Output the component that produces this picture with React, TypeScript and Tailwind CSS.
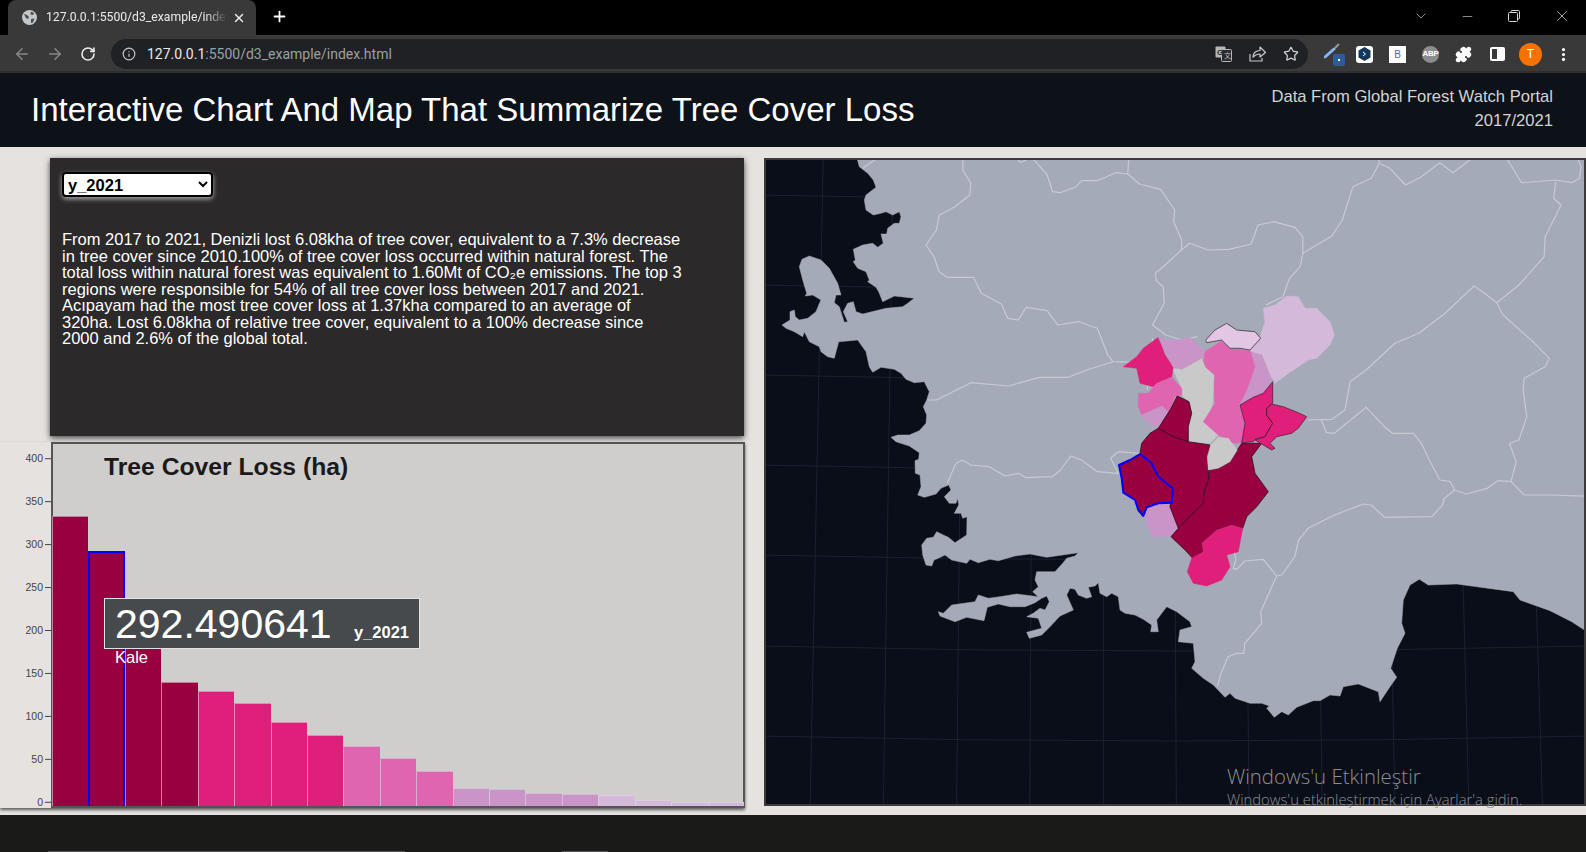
import { ArrowLeft, ArrowRight, ChevronDown, Minus, MoreVertical, Plus, Puzzle, RotateCw, Star, X, Info } from 'lucide-react'

type Pt = [number, number]

// Traced map points, kept in the crop coordinates they were read from
const z5 = (p: Pt): Pt => [760 + p[0] * 0.527, 150 + p[1] / 3]
const z6 = (p: Pt): Pt => [760 + p[0] * 0.527, 500 + p[1] / 3]
const z7 = (p: Pt): Pt => [1090 + p[0] / 3, 280 + p[1] / 3]
const crop = (x: number, y: number) => (p: Pt): Pt => [x + p[0] / 3, y + p[1] / 3]
const pts = (list: Pt[]) => list.map(p => `${p[0].toFixed(1)},${p[1].toFixed(1)}`).join(' ')

const COAST_A: Pt[] = [[272,-10],[280,20],[305,40],[322,60],[330,82],[300,105],[295,120],[300,150],[322,165],[345,160],[360,155],[380,165],[400,155],[405,170],[400,190],[385,190],[365,205],[362,222],[345,222],[352,250],[335,262],[320,250],[290,255],[262,268],[268,300],[262,305],[275,325],[300,335],[310,360],[305,365],[330,382],[338,395],[350,425],[385,408],[445,415],[425,430],[410,440],[360,445],[290,462],[270,455],[262,425],[245,430],[232,455],[245,485],[235,487],[220,440],[205,428],[210,405],[225,405],[215,370],[190,325],[165,300],[130,288],[108,298],[100,320],[110,360],[122,400],[118,408],[140,405],[165,420],[158,435],[150,455],[125,475],[100,480],[88,470],[85,450],[72,455],[72,480],[48,495],[60,505],[85,515],[110,530],[115,515],[130,545],[160,560],[165,575],[185,590],[205,595],[218,545]]
const COAST_B: Pt[] = [[220,5],[275,0],[300,35],[310,80],[320,97],[345,82],[385,88],[405,100],[420,118],[445,128],[475,125],[490,155],[482,180],[472,200],[482,225],[480,250],[460,272],[430,285],[395,285],[375,292],[390,305],[430,318],[460,338],[458,358],[447,362],[448,400],[462,405],[465,440],[455,465],[475,472],[510,462],[525,445],[548,435],[555,450],[535,470],[550,490],[570,490],[575,475],[578,495],[565,520],[585,520],[590,535],[603,530]]
const COAST_C: Pt[] = [[170,15],[135,38],[115,22],[100,15],[80,5],[70,22],[50,25],[35,45],[38,75],[48,105],[65,108],[72,90],[85,85],[105,75],[125,90],[170,100],[180,88],[205,98],[240,88],[265,92],[315,78],[360,72],[410,82],[505,68],[495,78],[470,85],[458,100],[435,125],[380,125],[375,150],[385,170],[368,185],[385,200],[320,192],[270,200],[235,205],[205,195],[195,215],[125,225],[100,250],[85,245],[90,258],[135,275],[170,262],[222,272],[232,232],[265,222],[300,230],[345,230],[375,218],[395,205],[410,198],[418,215],[405,240],[390,235],[370,250],[350,260],[385,265],[395,295],[350,307],[358,325],[395,315],[420,290],[450,258],[490,240],[470,195],[480,175],[495,178],[505,195],[530,205],[545,200],[535,172],[555,168],[565,158],[570,190],[590,200],[605,190],[625,200],[630,240],[645,250],[675,255],[700,268],[725,285],[722,305],[745,305],[740,270],[755,250],[770,230],[800,245],[840,275],[845,290],[810,300],[805,335],[850,340],[855,395],[845,415],[880,445],[900,458]]
const COAST_D: Pt[] = [[130,345],[165,382],[180,370],[195,385],[240,400],[275,400],[298,408],[290,415],[313,442],[335,425],[355,435],[380,412],[430,392],[450,392],[480,375],[510,378],[520,350],[565,342],[625,365],[630,395],[660,350],[680,322],[662,295],[682,235],[705,190],[695,160],[700,90],[720,45],[748,28],[775,45],[860,42],[1030,65],[1050,90],[1140,122],[1205,155],[1240,178],[1290,200]]

const LAND: Pt[] = [
  ...COAST_A.map(crop(766, 160)),
  ...COAST_B.map(crop(766, 340)),
  ...COAST_C.map(crop(910, 530)),
  ...COAST_D.map(crop(1170, 570)),
  [1600, 150],
]

const BORDERS_TOP: Pt[][] = [
  [[385,20],[385,60],[400,100],[398,135],[370,170],[340,195],[335,240],[315,285],[330,320],[340,365],[355,382],[405,382],[420,430],[458,462],[470,505],[490,510],[505,472],[545,482],[565,525],[605,515],[640,535],[660,615],[670,635],[720,637]],
  [[670,635],[620,660],[585,682],[530,682],[472,708],[400,698],[360,730],[335,750],[318,750]],
  [[515,20],[545,75],[555,125],[570,128],[600,110],[610,92],[640,92],[675,68],[698,72],[700,20]],
  [[698,72],[720,102],[760,118],[787,180],[785,215],[800,270],[800,300],[765,350],[750,370],[752,392],[765,410],[767,460],[745,525],[770,555],[800,570],[830,560]],
  [[800,300],[815,280],[850,300],[890,298],[932,282],[945,225],[975,215],[1015,232],[1030,260],[1030,310],[1025,350],[1005,385],[992,440]],
  [[1030,310],[1085,258],[1105,210],[1125,110],[1160,85],[1175,40],[1175,20]],
  [[1175,40],[1195,55],[1225,105],[1255,80],[1290,38],[1315,68],[1355,20]],
  [[1415,20],[1445,98],[1510,90],[1540,98],[1555,85],[1558,50],[1550,20]],
  [[1510,95],[1506,145],[1520,165],[1490,260],[1488,320],[1440,405],[1398,458],[1375,430],[1355,408],[1300,490],[1250,550],[1205,580],[1150,660],[1120,695],[1110,780],[1085,808],[1040,810]],
  [[1398,458],[1410,495],[1470,580],[1498,625],[1490,650],[1450,685],[1448,720],[1455,800],[1440,870],[1422,880],[1435,935],[1425,995],[1400,992],[1380,1015],[1340,1032],[1318,1020],[1295,1050]],
  [[1425,995],[1450,1035],[1500,1035],[1600,1040]],
  [[1065,810],[1075,848],[1090,850],[1150,772],[1185,830],[1200,850],[1240,850],[1255,880],[1270,930],[1290,990],[1310,995],[1318,1020]],
  [[720,910],[680,905],[665,925],[680,970],[640,965],[610,930],[590,918],[570,960],[555,980],[505,983],[490,970],[465,978],[435,950],[400,945],[385,930],[372,940],[355,1000]],
  [[975,700],[1045,620]],
  [[490,30],[495,38],[510,25]],
  [[195,55],[222,25]],
  [[960,465],[992,440]],
  [[745,565],[735,720]],
]
const BORDERS_BOTTOM: Pt[][] = [
  [[1298,0],[1295,15],[1275,50],[1185,52],[1160,15],[1145,12],[1090,45],[1040,85],[1022,120],[1015,170],[990,225],[980,228],[955,178],[920,183],[905,208],[898,205],[903,180],[900,155]],
  [[980,228],[950,335],[952,370],[920,430],[918,460],[905,460],[888,470],[875,520],[868,560]],
]

const CRIMSON = '#98003f'
const HOT = '#df1f7a'
const PINK = '#e065b0'
const PURPLE = '#c994c7'
const LILAC = '#d4b9da'
const GREY = '#c9c9c9'

const REGIONS: { fill: string; stroke?: string; width?: number; points: Pt[] }[] = [
  { fill: LILAC, points: [[520,85],[555,75],[590,48],[625,50],[645,85],[680,85],[700,105],[720,125],[733,165],[720,195],[680,235],[655,240],[610,270],[555,305],[545,295],[520,235],[480,212],[510,170],[525,125]] },
  { fill: PURPLE, points: [[480,215],[515,225],[545,300],[520,340],[490,352],[447,375],[470,330],[495,260]] },
  { fill: PINK, points: [[345,215],[395,182],[420,205],[480,212],[495,260],[470,330],[447,375],[420,365],[375,370],[368,290],[340,250]] },
  { fill: GREY, points: [[247,265],[275,268],[335,235],[345,262],[372,285],[368,370],[355,420],[340,425],[385,465],[360,490],[295,485],[295,440],[305,400],[297,365],[275,345],[275,325]] },
  { fill: PINK, points: [[375,370],[420,365],[447,375],[465,430],[455,488],[430,490],[385,465],[340,425]] },
  { fill: HOT, points: [[100,260],[140,230],[160,205],[205,172],[225,225],[250,262],[245,290],[215,305],[190,320],[150,310],[140,265]] },
  { fill: PURPLE, points: [[205,172],[225,180],[265,180],[300,172],[345,215],[335,235],[275,268],[250,262]] },
  { fill: PINK, points: [[145,340],[175,340],[200,310],[245,292],[275,325],[275,345],[255,350],[235,395],[215,378],[155,405],[145,380]] },
  { fill: PURPLE, points: [[155,405],[215,378],[235,395],[203,445],[165,420]] },
  { fill: PURPLE, points: [[165,700],[170,682],[205,670],[240,675],[265,745],[245,768],[190,770],[170,735]] },
  { fill: CRIMSON, stroke: '#2a1020', width: 0.8, points: [[205,445],[240,390],[262,348],[297,365],[305,400],[295,440],[295,485],[250,470]] },
  { fill: CRIMSON, stroke: '#2a1020', width: 0.8, points: [[150,520],[155,490],[180,460],[205,445],[250,470],[295,485],[360,495],[352,570],[358,590],[342,640],[340,670],[300,710],[265,745],[240,680],[248,625],[205,590],[185,550]] },
  { fill: CRIMSON, stroke: '#2a1020', width: 0.8, points: [[243,770],[265,745],[300,710],[340,670],[342,640],[358,590],[355,570],[385,565],[420,545],[442,510],[455,490],[515,490],[485,530],[495,580],[535,635],[500,680],[470,710],[458,745],[425,735],[380,750],[335,790],[340,815],[308,835],[285,810]] },
  { fill: GREY, points: [[385,472],[415,475],[442,510],[420,545],[385,565],[355,570],[352,530],[362,495]] },
  { fill: HOT, stroke: '#2a1020', width: 0.6, points: [[455,488],[465,430],[450,375],[490,352],[520,340],[548,305],[548,370],[530,385],[530,405],[548,430],[525,470],[495,478],[490,485]] },
  { fill: HOT, stroke: '#2a1020', width: 0.6, points: [[530,385],[545,372],[580,380],[625,398],[650,410],[625,445],[605,460],[560,470],[540,490],[555,505],[545,510],[495,480],[525,470],[548,430],[530,405]] },
  { fill: HOT, points: [[335,790],[380,750],[425,735],[458,745],[445,815],[410,825],[420,860],[395,900],[350,918],[310,910],[292,875],[305,835],[340,815]] },
  { fill: '#e3c6e4', stroke: '#55525a', width: 1, points: [[347,180],[375,150],[410,130],[440,150],[495,155],[512,175],[480,210],[450,205],[420,205],[395,180],[350,188]] },
  { fill: CRIMSON, stroke: '#0000ff', width: 2, points: [[150,522],[185,550],[205,590],[248,625],[245,668],[205,670],[170,682],[160,708],[145,690],[135,660],[100,638],[95,595],[87,555],[120,540]] },
]

const MERIDIANS = [95, 234, 373, 512, 652, 790, 928, 1067, 1205, 1345, 1485]
const PARALLELS = [197, 287, 377, 467, 557, 648, 738]

const TICKS = [400, 350, 300, 250, 200, 150, 100, 50, 0]

// bar heights in px above the panel floor
const BARS: { h: number; color: string; active?: boolean }[] = [
  { h: 290, color: CRIMSON },
  { h: 255, color: CRIMSON, active: true },
  { h: 205, color: CRIMSON },
  { h: 124, color: CRIMSON },
  { h: 115, color: HOT },
  { h: 103, color: HOT },
  { h: 84, color: HOT },
  { h: 71, color: HOT },
  { h: 60, color: PINK },
  { h: 48, color: PINK },
  { h: 35, color: PINK },
  { h: 18, color: PURPLE },
  { h: 17, color: PURPLE },
  { h: 13, color: PURPLE },
  { h: 12, color: PURPLE },
  { h: 11, color: LILAC },
  { h: 6, color: LILAC },
  { h: 4, color: LILAC },
  { h: 4, color: LILAC },
]

function BrowserChrome() {
  return (
    <div className="h-[73px] shrink-0">
      {/* Tab strip */}
      <div className="h-[35px] bg-black flex items-end">
        <div className="ml-2 w-[248px] h-[35px] bg-[#393939] rounded-t-lg flex items-center pl-[14px] text-[#e8eaed]">
          <svg width="15" height="15" viewBox="0 0 15 15" className="shrink-0">
            <circle cx="7.500" cy="7.500" r="7.500" fill="#c4c7c9" />
            <path d="M2 4l3 1 2 2-1 2-2-1zM9 1.500l3 1.500-1 2-2.500-.5zM9 9l3.500-.5-1.500 4-2 .5z" fill="#4a4c4e" />
          </svg>
          <span className="ml-[9px] w-[181px] whitespace-nowrap text-[12.200px] font-['Roboto',sans-serif] [mask-image:linear-gradient(to_right,black_88%,transparent)]">127.0.0.1:5500/d3_example/index</span>
          <X size={14} strokeWidth={2.500} className="ml-[5px] shrink-0" />
        </div>
        <Plus size={17} strokeWidth={2.500} className="ml-[15px] mb-[10px] text-white" />
        <div className="ml-auto h-[32px] flex items-center text-[#d5d5d5] self-start">
          <ChevronDown size={16} strokeWidth={1} className="mr-[31px]" />
          <Minus size={15} strokeWidth={1} className="mr-[33px]" />
          <svg width="12" height="12" viewBox="0 0 12 12" fill="none" stroke="currentColor" className="mr-[33px]">
            <rect x="0.500" y="2.500" width="9" height="9" rx="1" />
            <path d="M3 2.500V1.500a1 1 0 0 1 1-1h6.500a1 1 0 0 1 1 1V8a1 1 0 0 1-1 1H9.500" />
          </svg>
          <X size={18} strokeWidth={1} className="mr-[15px]" />
        </div>
      </div>
      {/* Toolbar */}
      <div className="h-[38px] bg-[#393939] border-b-2 border-[#2e2e2e] flex items-center pt-[2px] text-[#c6c8ca]">
        <ArrowLeft size={18} className="ml-[13px] text-[#85878a]" />
        <ArrowRight size={18} className="ml-[15px] text-[#85878a]" />
        <RotateCw size={16} strokeWidth={2.400} className="ml-[16px] text-[#e8eaed]" />
        <div className="ml-[15px] w-[1197px] h-[30px] rounded-full bg-[#202124] flex items-center pl-[11px]">
          <Info size={14} className="text-[#c6c8ca]" />
          <span className="ml-[11px] text-[14px] font-['Roboto',sans-serif] text-[#9aa0a6] whitespace-nowrap">
            <span className="text-[#e8eaed]">127.0.0.1</span>:5500/d3_example/index.html
          </span>
          <div className="ml-auto flex items-center gap-[17px] pr-[9px]">
            <svg width="17" height="16" viewBox="0 0 17 16">
              <rect x="0.500" y="0.500" width="10" height="11" rx="1" fill="#b5b7b9" />
              <rect x="6.500" y="3.500" width="10" height="12" rx="1" fill="#2a2b2e" stroke="#b5b7b9" />
              <text x="2" y="9" fontSize="8" fontWeight="700" fill="#2a2b2e" fontFamily="Liberation Sans, sans-serif">G</text>
              <text x="9" y="12" fontSize="7" fill="#b5b7b9" fontFamily="Noto Sans CJK SC, sans-serif">文</text>
            </svg>
            <svg width="17" height="16" viewBox="0 0 17 16" fill="none" stroke="#c6c8ca" strokeWidth="1.200" strokeLinejoin="round">
              <path d="M1 8v7h12v-3" />
              <path d="M4 11c0-4 3-6.500 7-6.500V1l5.500 5.500L11 11V8c-3 0-5 1-7 3z" />
            </svg>
            <Star size={16} strokeWidth={1.800} className="text-[#d0d2d4]" />
          </div>
        </div>
        <div className="ml-[16px] w-[24px] h-[24px] relative shrink-0">
          <svg width="18" height="18" viewBox="0 0 18 18" className="absolute left-0 top-0">
            <path d="M1 15 10 7" stroke="#8ab4f8" strokeWidth="3" strokeLinecap="round" />
            <path d="M11 6 15 2" stroke="#9a9c9e" strokeWidth="2" />
          </svg>
          <div className="absolute left-[9px] top-[12px] w-[12px] h-[12px] rounded-[2px] bg-[#2f5c96] flex items-center justify-center">
            <span className="w-[2px] h-[2px] bg-white" />
          </div>
        </div>
        <div className="ml-[8px] w-[17px] h-[17px] rounded-[3px] bg-white flex items-center justify-center shrink-0">
          <svg width="13" height="14" viewBox="0 0 13 14">
            <path d="M6.500 0 12.500 3.500v7L6.500 14 .5 10.500v-7z" fill="#14385c" />
            <path d="M5 5l2.500 2L5 9" stroke="#fff" fill="none" />
          </svg>
        </div>
        <div className="ml-[16px] w-[17px] h-[17px] bg-white flex items-center justify-center text-[10px] text-[#5b5bd6] shrink-0">B</div>
        <div className="ml-[16px] w-[17px] h-[17px] rounded-full bg-[#8c8c8c] flex items-center justify-center text-[8px] font-bold text-white shrink-0 tracking-[-0.3px]">ABP</div>
        <Puzzle size={17} fill="#fff" className="ml-[16px] text-white shrink-0" />
        <div className="ml-[18px] w-[15px] h-[14px] border-2 border-white rounded-[2px] flex justify-end shrink-0">
          <span className="w-[6px] bg-white" />
        </div>
        <div className="ml-[14px] w-[23px] h-[23px] rounded-full bg-[#f57200] flex items-center justify-center text-[12px] text-white shrink-0">T</div>
        <MoreVertical size={17} strokeWidth={2.500} className="ml-[13px] text-white shrink-0" />
      </div>
    </div>
  )
}

function Chart() {
  return (
    <div className="mt-[6px] w-[745px] h-[366px] flex bg-[#e5e2e0] shadow-[0_2px_3px_rgba(0,0,0,0.6)]">
      {/* y axis */}
      <svg width="51" height="366" className="shrink-0">
        {TICKS.map(t => {
          const y = 360.300 - t * 0.859
          return (
            <g key={t}>
              <line x1="45" x2="51" y1={y} y2={y} stroke="#444" />
              <text x="43" y={y + 3.500} textAnchor="end" fontSize="10.500" fill="#444" fontFamily="Liberation Sans, sans-serif">{t}</text>
            </g>
          )
        })}
      </svg>
      <div className="relative flex-1 border-2 border-[#555] bg-[#cfcecc]">
        <h2 className="ml-[51px] mt-[8px] text-[24.700px] leading-[30px] font-bold text-[#1a1a1a]">Tree Cover Loss (ha)</h2>
        <div className="absolute -left-px right-[-1px] bottom-0 grid grid-cols-[repeat(19,minmax(0,1fr))] items-end">
          {BARS.map((bar, i) => (
            <div
              key={i}
              className={bar.active ? 'border-2 border-[#0000ff] border-b-0' : 'border-l border-t border-[#dcdcdc]/60'}
              style={{ height: bar.h, backgroundColor: bar.color }}
            />
          ))}
        </div>
        {/* Tooltip */}
        <div className="absolute left-[51px] top-[154px] w-[316px] h-[51px] bg-[#464a4c] border border-[#e2e2e2] text-white flex items-end pl-[10px] pb-[1px]">
          <span className="text-[41px] leading-[46px]">292.490641</span>
          <span className="ml-auto mr-[10px] mb-[5px] text-[16.500px] leading-[20px] font-bold">y_2021</span>
          <span className="absolute left-[10px] top-full text-[16.500px] leading-[18px]">Kale</span>
        </div>
      </div>
    </div>
  )
}

function TreeMap() {
  return (
    <div className="relative ml-[19px] mt-px w-[822px] h-[648px] border-2 border-[#3c3a3a] bg-[#0a0e18]">
      <svg width="818" height="644" viewBox="766 160 818 644" className="block">
        <g stroke="#1b2130" fill="none">
          {MERIDIANS.map(x => {
            const top = z5([652 + (x - 652) * 0.955, 20])
            const bottom = z6([x, 925])
            return <line key={x} x1={top[0]} y1={top[1]} x2={bottom[0]} y2={bottom[1]} />
          })}
          {PARALLELS.map(y => (
            <path key={y} d={`M760 ${y - 2}Q1175 ${y + 8} 1590 ${y - 2}`} />
          ))}
        </g>
        <polygon points={pts(LAND)} fill="#a5aab8" stroke="#a5aab8" strokeWidth="0.500" strokeLinejoin="round" />
        <g fill="none" stroke="#c6cad3" strokeWidth="1.200" strokeLinejoin="round">
          {BORDERS_TOP.map((line, i) => <polyline key={i} points={pts(line.map(z5))} />)}
          {BORDERS_BOTTOM.map((line, i) => <polyline key={i} points={pts(line.map(z6))} />)}
        </g>
        {REGIONS.map((r, i) => (
          <polygon
            key={i}
            points={pts(r.points.map(z7))}
            fill={r.fill}
            stroke={r.stroke ?? r.fill}
            strokeWidth={r.width ?? 0.500}
            strokeLinejoin="round"
          />
        ))}
      </svg>
      {/* Windows activation watermark */}
      <div className="absolute left-[461px] top-[603px] font-['Open_Sans',sans-serif] text-[#8b8e94] whitespace-nowrap">
        <div className="text-[20.400px] leading-[26px] font-light">Windows'u Etkinleştir</div>
        <div className="text-[14.800px] leading-[20px] font-light">Windows'u etkinleştirmek için Ayarlar'a gidin.</div>
      </div>
    </div>
  )
}

export default function App() {
  return (
    <div className="w-[1586px] h-[852px] overflow-hidden flex flex-col bg-[#e5e2e0] font-['Liberation_Sans',Arial,sans-serif]">
      <BrowserChrome />

      <header className="h-[74px] shrink-0 bg-[#0d1118] flex items-start justify-between pl-[31px] pr-[33px]">
        <h1 className="mt-[17px] text-[33px] leading-[40px] text-white">Interactive Chart And Map That Summarize Tree Cover Loss</h1>
        <div className="mt-[12px] text-right text-[16.600px] leading-[24px] text-[#d2d3d4]">
          <div>Data From Global Forest Watch Portal</div>
          <div>2017/2021</div>
        </div>
      </header>

      <main className="h-[668px] shrink-0 flex items-start pt-[10px]">
        <div className="w-[745px] shrink-0">
          <section className="ml-[50px] mt-px w-[694px] h-[278px] bg-[#2b292a] shadow-[0_2px_6px_rgba(0,0,0,0.7)] pl-[12px] pt-[14px]">
            <select
              defaultValue="y_2021"
              className="block w-[151px] h-[25px] bg-white border-2 border-black rounded-[4px] text-[16.500px] font-bold text-black shadow-[0_2px_5px_rgba(255,255,255,0.6)] [appearance:auto]"
            >
              <option>y_2017</option>
              <option>y_2018</option>
              <option>y_2019</option>
              <option>y_2020</option>
              <option>y_2021</option>
            </select>
            <p className="mt-[34px] w-[621px] text-[16.500px] leading-[16.500px] text-white">
              From 2017 to 2021, Denizli lost 6.08kha of tree cover, equivalent to a 7.3% decrease in tree cover since 2010.100% of tree cover loss occurred within natural forest. The total loss within natural forest was equivalent to 1.60Mt of CO₂e emissions. The top 3 regions were responsible for 54% of all tree cover loss between 2017 and 2021. Acıpayam had the most tree cover loss at 1.37kha compared to an average of 320ha. Lost 6.08kha of relative tree cover, equivalent to a 100% decrease since 2000 and 2.6% of the global total.
            </p>
          </section>
          <Chart />
        </div>
        <TreeMap />
      </main>

      <footer className="flex-1 bg-[#1a1a18] flex items-end">
        <span className="ml-[48px] w-[357px] h-px bg-[#555]" />
        <span className="ml-[157px] w-[46px] h-px bg-[#555]" />
      </footer>
    </div>
  )
}
